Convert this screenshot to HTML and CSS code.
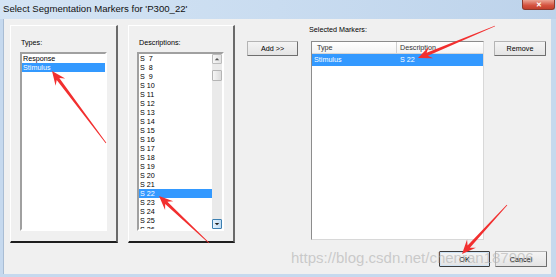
FILE: index.html
```html
<!DOCTYPE html>
<html lang="en">
<head>
    <meta charset="UTF-8">
    <title>Select Segmentation Markers</title>
    <link rel="stylesheet" href="styles.css">
</head>
<body>
    <div class="window">
        <div class="titlebar">
            <span class="title">Select Segmentation Markers for 'P300_22'</span>
            <button class="close">&#x2715;</button>
        </div>

        <div class="client">
            <div class="main">
                <div class="panel panel-types">
                    <div class="label">Types:</div>
                    <ul class="listbox types-list">
                        <li>Response</li>
                        <li class="sel">Stimulus</li>
                    </ul>
                </div>

                <div class="panel panel-desc">
                    <div class="label">Descriptions:</div>
                    <div class="listbox desc-box">
                        <ul class="desc-list">
                            <li>S  7</li>
                            <li>S  8</li>
                            <li>S  9</li>
                            <li>S 10</li>
                            <li>S 11</li>
                            <li>S 12</li>
                            <li>S 13</li>
                            <li>S 14</li>
                            <li>S 15</li>
                            <li>S 16</li>
                            <li>S 17</li>
                            <li>S 18</li>
                            <li>S 19</li>
                            <li>S 20</li>
                            <li>S 21</li>
                            <li class="sel">S 22</li>
                            <li>S 23</li>
                            <li>S 24</li>
                            <li>S 25</li>
                            <li>S 26</li>
                        </ul>
                        <div class="scrollbar">
                            <div class="sb-btn">
                                <svg viewBox="0 0 8 8" width="6" height="6"><path d="M1 5.5 L4 2.5 L7 5.5 Z" fill="#555"/></svg>
                            </div>
                            <div class="sb-thumb"></div>
                            <div class="sb-track"></div>
                            <div class="sb-btn sb-hover">
                                <svg viewBox="0 0 8 8" width="6" height="6"><path d="M1 2.5 L4 5.5 L7 2.5 Z" fill="#222"/></svg>
                            </div>
                        </div>
                    </div>
                </div>

                <div class="btn-col btn-col-add">
                    <button class="btn btn-add">Add &gt;&gt;</button>
                </div>

                <div class="selected">
                    <div class="label">Selected Markers:</div>
                    <div class="listview">
                        <div class="lv-head">
                            <span class="col-type">Type</span>
                            <span class="col-desc">Description</span>
                        </div>
                        <div class="lv-row sel">
                            <span class="col-type">Stimulus</span>
                            <span class="col-desc">S 22</span>
                        </div>
                    </div>
                </div>

                <div class="btn-col btn-col-remove">
                    <button class="btn btn-remove">Remove</button>
                </div>
            </div>

            <div class="footer">
                <button class="btn btn-ok">OK</button>
                <button class="btn btn-cancel">Cancel</button>
            </div>
        </div>

        <div class="watermark">https://blog.csdn.net/chenran187906</div>

        <!-- annotation arrows -->
        <svg class="arrows" viewBox="0 0 556 277" width="556" height="277">
            <polygon points="106.32,142.76 59.28,78.04 65.2,78.6 52,71 55.6,85.8 56.72,79.96 105.68,143.24"/>
            <polygon points="209.27,242.71 167.39,201.68 173.31,201.22 159,196 165.09,209.96 165.19,204.02 208.73,243.29"/>
            <polygon points="494.85,25.63 426.62,52.68 428.63,47.09 418,58 433.23,58.17 427.84,55.64 495.15,26.37"/>
            <polygon points="506.71,204.73 467.59,245.55 467.06,239.62 462,254 475.9,247.74 469.95,247.71 507.29,205.27"/>
        </svg>
    </div>
</body>
</html>
```

FILE: styles.css
```css
* {
    margin: 0;
    padding: 0;
    box-sizing: border-box;
    font-family: "Liberation Sans", Arial, sans-serif;
}

body {
    background-color: #fff;
}

.window {
    position: relative;
    width: 556px;
    height: 277px;
    background-color: #c6d9ee;
    overflow: hidden;
}

.titlebar {
    height: 19px;
    display: flex;
    align-items: flex-start;
    background: linear-gradient(to right, #d4e4f4, #c9dcf0 50%, #bdd3eb);
}

.title {
    padding: 3px 0 0 3px;
    font-size: 9.6px;
    line-height: 11px;
    color: #111;
}

.close {
    margin-left: auto;
    margin-right: 1px;
    width: 33px;
    height: 10px;
    border: 1px solid #8a3a2e;
    border-top: none;
    border-radius: 0 0 3px 3px;
    background: linear-gradient(#eba595, #d4523f 60%, #c3402d);
    color: #fff;
    font-size: 7px;
    line-height: 8px;
    font-weight: bold;
}

.client {
    margin-left: 3px;
    width: 548px;
    height: 255px;
    background-color: #f0f0f0;
    border-left: 1px solid #a9bdd4;
    padding: 6px 0 0 6px;
    font-size: 7.2px;
    color: #000;
}

.main {
    display: flex;
    align-items: flex-start;
    height: 218px;
}

.panel {
    height: 218px;
    border-top: 1px solid #fff;
    border-left: 1px solid #fff;
    border-right: 2px solid #6a6a6a;
    border-bottom: 2px solid #1e1e1e;
    padding-top: 12px;
}

.label {
    height: 10px;
    line-height: 10px;
    margin-bottom: 4px;
    padding-left: 1px;
}

.panel-types {
    width: 108px;
    padding-left: 9px;
}

.panel-desc {
    width: 107px;
    margin-left: 10px;
    padding-left: 8px;
}

.panel-desc .label {
    padding-left: 2px;
}

.listbox {
    list-style: none;
    height: 179px;
    background-color: #fff;
    border: 2px solid;
    border-color: #a0a0a0 #fff #fff #a0a0a0;
}

.types-list {
    width: 87px;
}

.listbox li,
.desc-list li {
    height: 9px;
    line-height: 9px;
    padding-left: 1px;
    white-space: pre;
    list-style: none;
}

.sel {
    background-color: #3399ff;
    color: #fff;
}

.desc-box {
    width: 87px;
    display: flex;
    overflow: hidden;
}

.desc-list {
    flex: 1;
    overflow: hidden;
}

.scrollbar {
    width: 10px;
    display: flex;
    flex-direction: column;
    background-color: #eaeaea;
}

.sb-btn {
    height: 10px;
    display: flex;
    align-items: center;
    justify-content: center;
    border: 1px solid #bcbcbc;
    border-radius: 1px;
    background: linear-gradient(to right, #f6f6f6, #e2e2e2);
}

.sb-hover {
    border-color: #3c7fb1;
    background: linear-gradient(to right, #e3f1fc, #bfdcf3);
}

.sb-thumb {
    margin-top: 6px;
    height: 11px;
    border: 1px solid #b5b5b5;
    border-radius: 1px;
    background: linear-gradient(to right, #f6f6f6, #dcdcdc);
}

.sb-track {
    flex: 1;
}

.btn {
    height: 15px;
    font-size: 7.2px;
    color: #000;
    background: linear-gradient(#f4f4f4, #e4e4e4);
    border: 1px solid #b4b4b4;
    border-right-color: #6e6e6e;
    border-bottom-color: #6e6e6e;
    border-radius: 1px;
}

.btn-col-add {
    margin-left: 12px;
    padding-top: 16px;
}

.btn-add {
    width: 51px;
}

.selected {
    margin-left: 11px;
    width: 175px;
}

.selected .label {
    padding-left: 0;
    margin-bottom: 6px;
}

.listview {
    margin-left: 2px;
    width: 173px;
    height: 199px;
    background-color: #fff;
    border: 1px solid #8c8c8c;
    border-right-color: #d8d8d8;
    border-bottom-color: #d8d8d8;
}

.lv-head {
    display: flex;
    height: 12px;
    line-height: 11px;
    color: #333;
    background: linear-gradient(#ffffff, #f3f3f3);
    border-bottom: 1px solid #d5d5d5;
}

.lv-head .col-type {
    width: 85px;
    padding-left: 5px;
    border-right: 1px solid #cfcfcf;
}

.lv-head .col-desc {
    flex: 1;
    padding-left: 3px;
}

.lv-row {
    display: flex;
    height: 12px;
    line-height: 12px;
}

.lv-row .col-type {
    width: 86px;
    padding-left: 2px;
}

.lv-row .col-desc {
    flex: 1;
    padding-left: 2px;
}

.btn-col-remove {
    margin-left: 10px;
    padding-top: 16px;
}

.btn-remove {
    width: 52px;
}

.footer {
    display: flex;
    justify-content: flex-end;
    gap: 5px;
    margin-top: 8px;
    padding-right: 4px;
}

.footer .btn {
    height: 16px;
}

.btn-ok {
    width: 51px;
    border: 1px solid #3c3c3c;
    box-shadow: inset 0 0 0 1px #cfe3f5;
}

.btn-cancel {
    width: 52px;
}

.watermark {
    position: absolute;
    left: 291px;
    top: 250px;
    font-size: 15px;
    line-height: 15px;
    color: rgba(175, 175, 175, 0.6);
    white-space: nowrap;
    pointer-events: none;
}

.arrows {
    position: absolute;
    left: 0;
    top: 0;
    pointer-events: none;
}

.arrows polygon {
    fill: #f22f2f;
}
```
